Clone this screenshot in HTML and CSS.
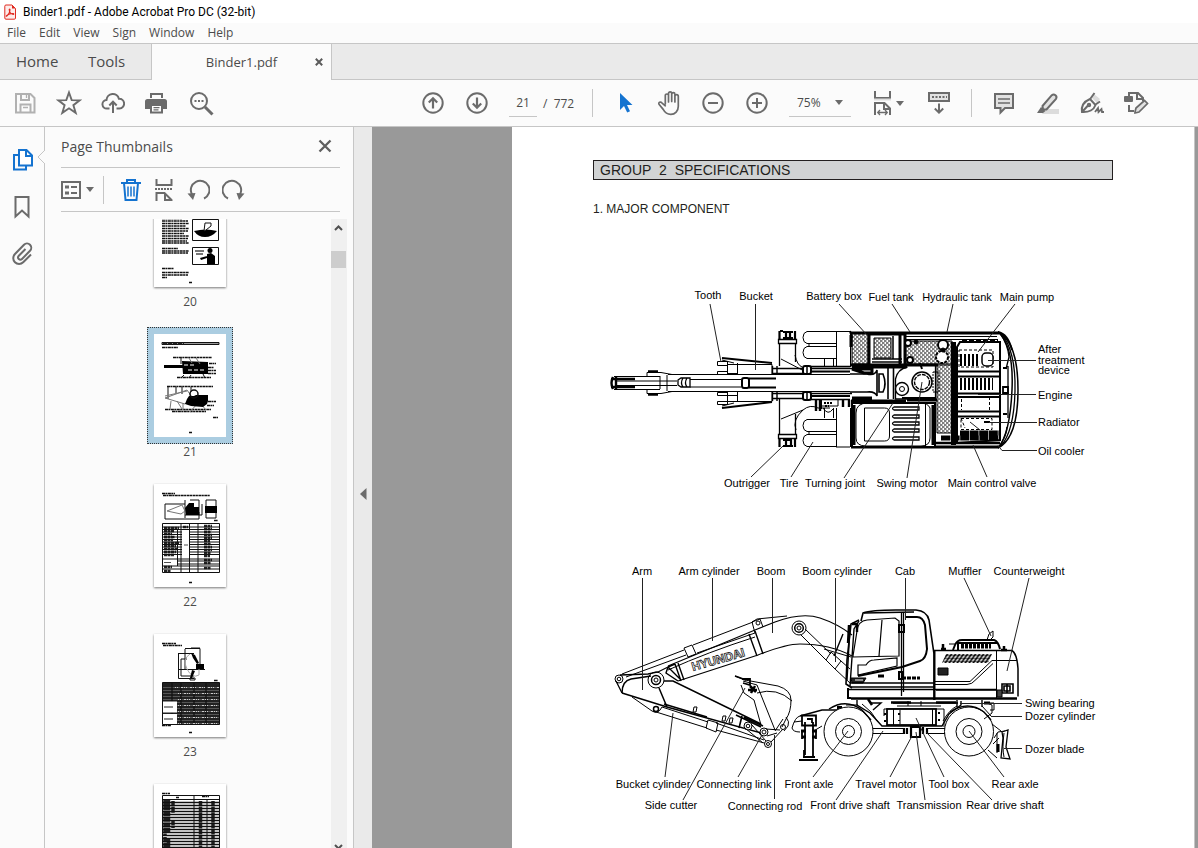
FILE: index.html
```html
<!DOCTYPE html>
<html lang="en">
<head>
<meta charset="utf-8">
<title>Binder1.pdf - Adobe Acrobat Pro DC (32-bit)</title>
<link rel="stylesheet" href="styles.css">
</head>
<body>
<div class="app">
  <header class="titlebar">
    <svg class="logo" width="12" height="16" viewBox="0 0 12 16" fill="none" stroke="#e02a20" aria-hidden="true"><path d="M2 1h6l3.500 3.500v9.500a1.200 1.200 0 0 1-1.200 1.200h-8.300a1.200 1.200 0 0 1-1.200-1.200v-11.800A1.200 1.200 0 0 1 2 1z" fill="#fdecea"/><path d="M8 1v3.500h3.500z" fill="#e02a20" stroke="none"/><path d="M2.600 12.200c1.500-1 3.200-3.600 3.400-6.400.1-.9-.9-.9-.8 0 .3 2.200 1.800 4.300 4 4.700.8 0 .8-.9 0-1-2.200-.2-4.400.6-6.400 1.900-.7.500-.7.900-.2.800z" stroke-width="1.100"/></svg>
    <span>Binder1.pdf - Adobe Acrobat Pro DC (32-bit)</span>
  </header>
  <nav class="menubar">
    <button>File</button><button>Edit</button><button>View</button><button>Sign</button><button>Window</button><button>Help</button>
  </nav>
  <div class="tabs">
    <button class="tab home">Home</button><button class="tab tools-tab">Tools</button>
    <div class="doc-tab"><button class="tab-name">Binder1.pdf</button><button class="tab-close" aria-label="Close tab"><svg width="8" height="8" viewBox="0 0 8 8" stroke="#5b5b5b" stroke-width="2"><path d="M.8.8l6.400 6.400M7.200.8L.8 7.200"/></svg></button></div>
    <div class="tab-fill"></div>
  </div>
  <div class="toolbar">
    <button class="tool" aria-label="Save"><svg width="24" height="24" viewBox="0 0 24 24" fill="none" stroke="#b1b1b1" stroke-width="2"><path d="M3 3h14.500l4 4v14.500H3z"/><path d="M8 3v6h8V3M7.500 21v-7.500h10V21"/><path d="M13.500 4v3M10 16.500h5" stroke-width="1.300"/></svg></button>
    <button class="tool" aria-label="Star"><svg width="26" height="26" viewBox="0 0 26 26" fill="none" stroke="#6b6b6b" stroke-width="1.900"><path d="M13 2.500l2.700 7.600 8 .2-6.300 4.900 2.300 7.700-6.700-4.600-6.700 4.600 2.300-7.700-6.300-4.900 8-.2z"/></svg></button>
    <button class="tool" aria-label="Upload"><svg width="24" height="24" viewBox="0 0 24 24" fill="none" stroke="#6b6b6b" stroke-width="2"><path d="M8.500 17.500H6a4.300 4.300 0 0 1-.5-8.600 6.300 6.300 0 0 1 12.400-1.200 4.900 4.900 0 0 1 .6 9.800h-3"/><path d="M12 22V11M8.300 14.500L12 10.700l3.700 3.800"/></svg></button>
    <button class="tool" aria-label="Print"><svg width="26" height="24" viewBox="0 0 26 24" fill="#6b6b6b"><path d="M6 7V2h13v5h-2V4H8v3zM1 10.500A2.500 2.500 0 0 1 3.500 8h17a2.500 2.500 0 0 1 2.500 2.500V18h-4v-4H6v4H1zM6 14h13v8.500H6z"/><path d="M8 15h9v5.500H8z" fill="#fff"/><path d="M9.500 16h6v1.200h-6zM9.500 18.300h5v1.200h-5z"/></svg></button>
    <button class="tool" aria-label="Search"><svg width="26" height="26" viewBox="0 0 26 26" fill="none" stroke="#6b6b6b" stroke-width="2"><circle cx="11" cy="11" r="8"/><path d="M17 17l7.500 7.500" stroke-width="3"/><path d="M6.500 11h2M10 11h2M13.500 11h2" stroke-width="1.800"/></svg></button>
    <div class="toolset">
      <button class="tool" aria-label="Previous page"><svg width="24" height="24" viewBox="0 0 24 24" fill="none" stroke="#6b6b6b" stroke-width="2"><circle cx="12" cy="12" r="9.700"/><path d="M12 17.500V7.500M7.800 11.500L12 7.200l4.200 4.300" stroke-width="2.200"/></svg></button>
      <button class="tool" aria-label="Next page"><svg width="24" height="24" viewBox="0 0 24 24" fill="none" stroke="#6b6b6b" stroke-width="2"><circle cx="12" cy="12" r="9.700"/><path d="M12 6.500v10M7.800 12.500l4.200 4.300 4.200-4.300" stroke-width="2.200"/></svg></button>
      <div class="pager"><input class="page-input" aria-label="Page number" value="21"><span>/&nbsp; 772</span></div>
      <button class="tool after-sep" aria-label="Select"><svg width="24" height="24" viewBox="0 0 24 24"><path d="M7 2v17l4-4 3.200 6.500 2.800-1.300-3-6.300h5.500z" fill="#1473d0"/></svg></button>
      <button class="tool" aria-label="Hand"><svg width="26" height="26" viewBox="0 0 26 26" fill="none" stroke="#6b6b6b" stroke-width="1.700" stroke-linecap="round" stroke-linejoin="round"><path d="M9.300 14V5.600a1.600 1.600 0 0 1 3.200 0V12M12.500 11.500V3.400a1.600 1.600 0 0 1 3.200 0v8.100M15.700 11.500V4.200a1.600 1.600 0 0 1 3.200 0V12M18.900 12V6.400a1.700 1.700 0 0 1 3.400 0v9.800c0 4.800-3.200 8.200-7.500 8.200-4 0-6-2-7.600-5L3 14.200c-.9-1.800 1.600-3 2.800-1.400l3.500 3"/></svg></button>
      <button class="tool" aria-label="Zoom out"><svg width="24" height="24" viewBox="0 0 24 24" fill="none" stroke="#6b6b6b" stroke-width="2"><circle cx="12" cy="12" r="9.700"/><path d="M7 12h10"/></svg></button>
      <button class="tool" aria-label="Zoom in"><svg width="24" height="24" viewBox="0 0 24 24" fill="none" stroke="#6b6b6b" stroke-width="2"><circle cx="12" cy="12" r="9.700"/><path d="M7 12h10M12 7v10"/></svg></button>
      <label class="zoom"><select aria-label="Zoom level"><option>75%</option></select><i class="caret"></i></label>
      <button class="tool fit" aria-label="Fit width"><svg width="22" height="26" viewBox="0 0 22 26" fill="none" stroke="#6b6b6b" stroke-width="2"><path d="M3 1v7h15V1"/><path d="M3 25V13h9.500l5.500 5.500V25M12 13v6h6"/><path d="M6 22.500h9M8 20l-2.300 2.500L8 25M13 20l2.300 2.500L13 25" stroke-width="1.300"/><path d="M2 9.500h17" stroke="#ddd"/></svg><i class="caret"></i></button>
      <button class="tool keys" aria-label="Scrolling mode"><svg width="24" height="24" viewBox="0 0 24 24" fill="none" stroke="#6b6b6b" stroke-width="2"><path d="M2 2h20v8H2z" fill="#e2e2e2"/><path d="M5 6h15" stroke-dasharray="2 1.500"/><path d="M12 12.500v9M7.800 17.500l4.200 4.200 4.200-4.200"/></svg></button>
      <span class="sep"></span>
      <button class="tool after-sep" aria-label="Comment"><svg width="24" height="24" viewBox="0 0 24 24" fill="#e2e2e2" stroke="#6b6b6b" stroke-width="2"><path d="M3 3h18v14h-8l-4.500 4.500V17H3z"/><path d="M6 8h12M6 12h12" stroke-width="1.500"/></svg></button>
      <button class="tool" aria-label="Highlight"><svg width="24" height="24" viewBox="0 0 24 24"><path d="M9 18h14v5H6z" fill="#dcdcdc"/><path d="M6.500 15L15.800 4.200a2.800 2.800 0 0 1 4.200 3.600L10.500 18.500H7z" fill="#e2e2e2" stroke="#6b6b6b" stroke-width="2"/><path d="M5 16l4.500 4-2.500 2H1z" fill="#6b6b6b"/></svg></button>
      <button class="tool" aria-label="Sign"><svg width="26" height="26" viewBox="0 0 26 26" fill="none" stroke="#6b6b6b" stroke-width="2"><path d="M15 4l6 5-3 4-6-6z" fill="#dcdcdc" stroke="none"/><path d="M3 22c-.8-5 1-10 8-13l5.500 6C15 19.500 10 22.500 3 22zM3 22l6-6.500M11.500 8.500L15.500 3M16.500 14.500l4.500-3"/><circle cx="10" cy="15" r="1.200"/><path d="M16 22l3-4 .5 4 3-3 .5 3h2" stroke-width="1.800"/></svg></button>
      <button class="tool" aria-label="Edit"><svg width="26" height="26" viewBox="0 0 26 26" fill="none" stroke="#6b6b6b" stroke-width="2"><path d="M6 6V3h9l5 5v3M14 3v6h6M6 15v6h5"/><rect x="1" y="6" width="9" height="6" rx="1" fill="#6b6b6b" stroke="none"/><path d="M12 22l1-4 8.500-7.500 3 3L16 22l-4 1z" fill="#e2e2e2" stroke-width="1.700"/></svg></button>
    </div>
  </div>
  <main class="workspace">
    <nav class="rail">
      <button aria-label="Page thumbnails"><svg width="22" height="24" viewBox="0 0 22 24" fill="none" stroke="#1473d0" stroke-width="2"><path d="M7 7H2v14.500h12V18"/><path d="M7 2h7.500L20 7.500V17.500H7z" fill="#fff"/><path d="M14 2v6h6"/></svg></button>
      <button aria-label="Bookmarks"><svg width="22" height="24" viewBox="0 0 22 24" fill="none" stroke="#6b6b6b" stroke-width="2"><path d="M3.500 2h13v19.500L10 15.500l-6.500 6z"/></svg></button>
      <button aria-label="Attachments"><svg width="22" height="24" viewBox="1 0 22 24" fill="none" stroke="#6b6b6b" stroke-width="2"><path d="M14.500 7L7.800 13.800a2.200 2.200 0 0 0 3.200 3.200l8-8.200a4.200 4.200 0 0 0-6-6L4 12a5.800 5.800 0 0 0 8.200 8.300L20 12.500"/></svg></button>
    </nav>
    <svg class="pointer" width="8" height="16" viewBox="0 0 8 16"><path d="M8 0v1L1 8l7 7v1" fill="#fbfbfb" stroke="#c6c6c6"/></svg>
    <aside class="panel">
      <div class="panel-head"><h2>Page Thumbnails</h2><button aria-label="Close panel"><svg width="14" height="14" viewBox="0 0 14 14" stroke="#5f5f5f" stroke-width="2.300"><path d="M1.500 1.500l11 11M12.500 1.500l-11 11"/></svg></button></div>
      <div class="panel-tools">
        <button class="opts" aria-label="Options"><svg width="20" height="18" viewBox="0 0 20 18" fill="none" stroke="#6b6b6b" stroke-width="2"><path d="M1 1h18v16H1z"/><path d="M4 6h4M4 12h4" stroke-width="3"/><path d="M10 6h6M10 12h6"/></svg><i class="caret"></i></button>
        <button aria-label="Delete"><svg width="22" height="24" viewBox="0 0 22 24" fill="none" stroke="#1473d0" stroke-width="2"><path d="M1 5h20M7 5V2h8v3M4 5l1.500 17h11L18 5"/><path d="M8 8.500v10M11 8.500v10M14 8.500v10" stroke-width="1.500"/></svg></button>
        <button aria-label="Extract"><svg width="20" height="24" viewBox="0 0 20 24" fill="none" stroke="#6b6b6b" stroke-width="2"><path d="M2.500 1v6h15V1M2.500 23v-8h8l7 7v1M11 15v7h7"/><path d="M1 11h18" stroke-dasharray="2 1"/></svg></button>
        <button aria-label="Rotate left"><svg width="24" height="24" viewBox="0 0 24 24" fill="none" stroke="#6b6b6b" stroke-width="2"><path d="M18 20.500a9.300 9.300 0 1 0-12-4"/><path d="M1.500 15.500l8-.5-2.500 7z" fill="#6b6b6b" stroke="none"/></svg></button>
        <button aria-label="Rotate right"><svg width="24" height="24" viewBox="0 0 24 24" fill="none" stroke="#6b6b6b" stroke-width="2"><path d="M6 20.500a9.300 9.300 0 1 1 12-4"/><path d="M22.500 15.500l-8-.5 2.500 7z" fill="#6b6b6b" stroke="none"/></svg></button>
      </div>
      <div class="thumb-area">
        <ol class="thumbs">
          <li><button><svg viewBox="0 0 72 103"><g class="tx"><path d="M8 34.500h20M8 37h26M8 39.500h27M8 42h24M8 44.500h27M8 47h26M8 49.500h22M8 52h27M8 54.500h26M8 57h25M8 59h27M8 64.500h16M8 67h27M8 69h26M8 84.500h12M8 88.500h27M8 91h26M8 93.500h5M35 98.500h3"/></g><path d="M38.500 35.500h26v21h-26zM38.500 63.500h26v17h-26z" fill="none" stroke="#111"/><path d="M40 47q12-3 23 0-5 6-12 6t-11-6z"/><path d="M50 47l1-8h6v3l-5 4z" fill="#fff" stroke="#111"/><circle cx="56" cy="66.500" r="2.500"/><path d="M53 70l4-1 4 3v8h-8zM46 74l7-2v2l-6 2z"/><path d="M41 67h9M42 70h7" stroke="#777" stroke-width="2"/></svg><span>20</span></button></li>
          <li class="current"><button><svg viewBox="0 0 72 103"><path d="M8 8.500h57v2H8z" fill="#999" stroke="#111"/><path d="M9 9.500h21" stroke="#222" stroke-width="2" stroke-dasharray="4 1"/><g class="tx"><path d="M8 13.500h16M19 23.500h39M23 43.500h34M13 52.500h46M11 75.500h46M18 77.500h34M59 83.500h5M35 98.500h3M55 29.500h7M54 33.500h6M54 36.500h8M54 39.500h8M54 67.500h8M53 71.500h7"/></g><path d="M28 27l26 1v12H29zM10 31h19v3H10z"/><path d="M27 24v6M30 41l-3 3M37 41l-2 3M49 40l2 4M14 53v12M22 53v6M28 53v7M37 53v5" stroke="#111"/><path d="M35 24l3 5M42 24l4 6M11 64l22-8 5 7-7 7zM11 62l22-5M17 67l-1 8M23 67l5 8M29 69v7M43 70l-7 8M47 70l5 6" fill="none" stroke="#777"/><path d="M33 65l2-3h5l2-1h12v6l-1 3-4 3-12-1-6-2z"/><circle cx="40" cy="60" r="4" fill="none" stroke="#111" stroke-width="1.500"/><path d="M30 31h12M34 36h16" stroke="#fff" stroke-dasharray="4 2"/></svg><span>21</span></button></li>
          <li><button><svg viewBox="0 0 72 103"><g class="tx"><path d="M8 9.500h13M9 11.500h47M60 36.500h4M35 98.500h3"/></g><path d="M11 20v15h34v-7M11 20h20M31 16v18M36 16h9v15M48 20v11H31M52 16h10v18H52z" fill="none" stroke="#111"/><path d="M13 27l15-6 3 6-4 3z" fill="none" stroke="#777"/><path d="M31 24l4-5h5v4h5v8H32zM51 22h12v7H51z"/><path d="M8.500 39.500h57v49h-57z" fill="#fff" stroke="#111"/><path d="M10 44h15M10 47h10M10 50h8M10 53h11M10 56h9M10 59h15M10 62h12M10 65h14M10 68h12M10 71h10M10 83h8M10 87h7M29 43h5M50 42h8M50 45h8M50 48h7M50 51h8M50 54h8M50 57h6M50 60h7M50 63h8M50 66h8M50 69h7M50 72h6M50 76h8M50 79h7M50 84h7" stroke="#222" stroke-width="2.500" stroke-dasharray="3 .5"/><path d="M9 43h57M9 45.500h57M9 48h57M9 50.500h57M9 53h57M9 55.500h57M9 58h57M9 60.500h57M9 63h57M9 65.500h57M9 68h57M9 70.500h57M9 75h57M24 77h42M24 80h42M9 82h57M9 85h57M23.500 46v36M27 39v49M35.500 39v49M44 39v49" stroke="#111"/><path d="M28 47h7v25h-7zM9 76h13v5H9z" fill="#fff"/><path d="M30 61h4M10 78.500h7" stroke="#222" stroke-width=".8"/></svg><span>22</span></button></li>
          <li><button><svg viewBox="0 0 72 103"><g class="tx"><path d="M8 9.500h14M9 11.500h19M60 46.500h4M8 91.500h9M35 98.500h3"/></g><path d="M24.500 19v25.500H40M24 19.500h16M31 15v20M31 14.500h15V35M24 35.500h27M27 25v17h13M27 25h6M37 14h9M36 44v2h5v-2z" fill="none" stroke="#111"/><path d="M36 20q-8 5-3 15t12 6V30" fill="none" stroke="#aaa"/><path d="M42 30h8v5h-8zM37 19l4 2 4 8-2 1-4-6zM38 36l3 1-3 7h-2z"/><path d="M8.500 48.500h57v42h-57z" fill="#555" stroke="#111"/><path d="M9 50h56M9 52h56M9 55h56M9 58h56M9 61h56M9 64h56M9 67h56M9 70h56M9 73h56M9 76h56M9 79h56M9 82h56M9 85h56M9 88h56M18 49v41M27 49v41M40 49v41M52 49v41" stroke="#111" stroke-width="1.300"/><path d="M21 53.500h44M24 59.500h40M24 65.500h40M24 71.500h40M24 77.500h40M24 83.500h40M24 89.500h40" stroke="#ccc" stroke-dasharray="1 1 1 3 2 1"/><path d="M9 67.500h14v11H9zM9 80h14v10H9z" fill="#fff"/><path d="M10 73h9M10 85h9" stroke="#222"/></svg><span>23</span></button></li>
          <li><button aria-label="24"><svg viewBox="0 0 72 103"><g class="tx"><path d="M8 9.500h8M22 13.500h3M48 12.500h7"/></g><path d="M8.500 11.500h57V103h-57zM8 15.500h58M40 11v92M53 15v88" fill="none" stroke="#111"/><path d="M11 16v36M14.500 16v32M11 53v12M14.500 55v9M19 17v12M19 36v8M46.500 17v46M59 17v46" stroke="#222" stroke-width="3.500" stroke-dasharray="5 .6"/><path d="M9 18.500h56M9 21.500h56M9 24.500h56M9 27.500h56M9 30.500h56M9 33.500h56M9 36.500h56M9 39.500h56M9 42.500h56M9 45.500h56M9 48.500h56M9 51.500h56M9 54.500h56M9 57.500h56M9 60.500h56M9 63.500h56" stroke="#111" stroke-width="1.300"/></svg></button></li>
        </ol>
        <div class="scrollbar"><svg width="9" height="6" viewBox="0 0 9 6" fill="none" stroke="#505050" stroke-width="2"><path d="M1 5l3.500-3.500L8 5"/></svg><div class="scroll-thumb"></div><svg class="down" width="9" height="6" viewBox="0 0 9 6" fill="none" stroke="#505050" stroke-width="2"><path d="M1 3l3.500 3.500L8 3"/></svg></div>
      </div>
    </aside>
    <button class="collapse" aria-label="Collapse panel"><svg width="7" height="12" viewBox="0 0 7 12"><path d="M6.500 0v12L0 6z" fill="#6b6b6b"/></svg></button>
    <section class="viewer">
      <article class="page">
        <h1>GROUP&nbsp; 2&nbsp; SPECIFICATIONS</h1>
        <h3>1. MAJOR COMPONENT</h3>
        <svg class="figure top-view" viewBox="593 280 520 220" role="img" aria-label="Top view">
          <defs>
            <pattern id="holes" width="4" height="4" patternUnits="userSpaceOnUse"><rect width="4" height="4" fill="#fff"/><path d="M0 1h2.500M2 3h2M0 3h.5" stroke="#000" stroke-width="1.100"/></pattern>
            <pattern id="fins" width="4" height="4" patternUnits="userSpaceOnUse"><path d="M1 0v4" stroke="#000" stroke-width="2"/></pattern>
          </defs>
          <g class="ink">
            <path d="M614 376.500h46M614 389.500h46M615 381h62M615 385.500h62M668 374.500h182M668 391.500h182M667 375v16"/>
            <path d="M613 377q-3 6 0 12M611 379h24M611 387h24M616 376v13" stroke-width="2.400"/>
            <path d="M647 376v-3.500h14l11 2M647 390v3.500h14l11-2M660 376v13"/><path d="M648 371.500h10M648 394.500h10" stroke-width="2.500"/>
            <path d="M678 380l3-2h9v9h-9l-3-2zM683 378q-3 5 0 9M687 378q-3 5 0 9" stroke-width="1.300"/><path d="M690 379.500h51M690 387h51"/>
            <rect x="742" y="378" width="7" height="10" rx="2" stroke-width="2"/><path d="M749 378.500h27M749 387.500h27" stroke-width="2"/>
            <path d="M717.500 361.500h10v4h-10zM717.500 371.500h10v3h-10zM717.500 392.500h10v3h-10zM717.500 401.500h10v3h-10zM727.500 361v13M727.500 392v13M737.500 363v11M737.500 392v10M727 364.500h45v9.500M727 401.500h45V392M727 373.500h10M727 395.500h10"/>
            <path d="M722 358l50 5M722 408l50-6" stroke-width="2"/><path d="M722 360l12 3M722 406l12-3"/>
            <path d="M779.500 344v22M795.500 344v18M779.500 398v36M795.500 414v20M778.500 339.500h18v4h-18zM778.500 434.500h18v4h-18z" stroke-width="1.300"/>
            <path d="M779.500 331v8M783 332h10M795 331v8M786 333v5M790 333v5M780 331h3M783 338h10M779.500 439v8M795 439v8M783 446h10M786 439v7M791 440v5M783 440h9" stroke-width="2.200"/>
            <path d="M781 359l27 14M795 355q2 10 7 12M781 419l22-9q7-6 15-2h12M796 430q-4-10 7-20"/>
            <path d="M772 368.500h80M772 373.500h32M772 393.500h80M772 398.500h32M772.500 366v9M777 366v9M772.500 392v9M777 392v9M810 366.500h40M810 399.500h40" stroke-width="1.400"/><path d="M812 371.500h38M812 396h38" stroke-width="2"/>
            <rect x="803" y="366" width="8" height="8" rx="2" fill="#fff" stroke-width="2"/><rect x="803" y="392" width="8" height="8" rx="2" fill="#fff" stroke-width="2"/><path d="M807 366v8M807 392v8" stroke-width="1.500"/>
            <path d="M837 331.500h-30q-4 1-4 6t4 6h30M837 346.500h-30q-4 1-4 6t4 6h30M837 419.500h-30q-4 1-4 6t4 6h30M837 434.500h-30q-4 1-4 6t4 6h30M836.500 331v36M836.500 408v39M850.500 331v36M850.500 408v39M836 331.500h14M836 447h14M809 343v4M809 431v4"/>
            <path d="M824.500 359v7M833.500 359v7M821.500 400v9M821 406h17v-6M824.500 408v10M833.500 408v10M823 408q5 8 10 1"/><path d="M816 400v11M820 400v11M843 400v7M849 400v7" stroke-width="2.400"/><path d="M824 403h9M825 406h4" stroke-dasharray="2 1" stroke-width="2"/>
            <path d="M851 333h148M851 447h148" stroke-width="3"/><path d="M868 339.500h130M905 336.500h92"/>
            <path d="M852 334h16v30h-16zM904 341h48v23h-48zM937 365h15v68h-15z" fill="url(#holes)"/>
            <path d="M869 334v33h36v-33z" fill="#fff" stroke-width="3"/><path d="M874 338h17v20h-17z" fill="url(#holes)"/><path d="M872 359h30M872 362h30M893 336v23" stroke-width="1.500"/><path d="M900 335v31M851 335v12M851 365h54M906 365h32" stroke-width="3"/><path d="M852 338l-2-7" stroke-width="2"/>
            <circle cx="943" cy="345" r="5" fill="#fff" stroke-width="2"/><circle cx="942" cy="357" r="6" fill="#fff" stroke-width="2" stroke-dasharray="3 1"/><circle cx="908" cy="343" r="3" fill="#fff" stroke-width="2"/><circle cx="916" cy="342" r="2" fill="#000"/><circle cx="910" cy="360" r="3" fill="#fff" stroke-width="2"/><circle cx="943" cy="350" r="2" fill="#000"/>
            <path d="M953.500 342v103" stroke-width="5"/><path d="M957 443V347l3-5h40v98z" fill="#fff" stroke-width="2"/>
            <path d="M962 341h36" stroke-width="4" stroke-dasharray="5 2"/><path d="M960 354h18v12h-18zM960 378h33v12h-33z" fill="url(#fins)" stroke="none"/><path d="M959 350h34v17h-34z" stroke-dasharray="3 2"/>
            <rect x="982" y="353" width="11" height="13" rx="4" fill="#fff" stroke-width="1.500"/>
            <path d="M954 371.500h46M954 376.500h46M954 393.500h46M954 397h46M954 411.500h46M954 416.500h46M1000 343v92" stroke-width="2"/><path d="M961.500 399v11M989.500 397v14M961 418.500h31v11h-31zM961 418l4 10" stroke-dasharray="3 2"/>
            <path d="M960 433h39M941 438h58" stroke-width="5" stroke-dasharray="9 .6"/><path d="M935 443h65" stroke-width="2.400"/><path d="M984 422h6" stroke-width="2"/>
            <path d="M998 332q20 10 20 58t-20 58q12-14 14-58t-14-58z" fill="#fff" stroke-width="1.500"/><path d="M1001 333q15 18 14 58t-14 55M1000 333q8 12 9 24l-3 12M1008 366v52M999 447q8-12 8-20" stroke-width="1.300"/><path d="M998 332q10 2 14 18M1003 387v6h5v-6zM1003 368h4M1003 414h4" stroke-width="1.800"/>
            <path d="M850 374h17q8 2 10-4v26q-2-5-10-4h-17M879 374v18h4q4-8 0-18zM893.500 367v32M888 367v32" stroke-width="1.600"/><path d="M852 366h55M852 369h20v4h-8zM852 398h20M851 401h55M907 400h30" stroke-width="3"/>
            <path d="M935.500 365v34h-40v-20q2-10 12-12" stroke-width="1.300"/><circle cx="922" cy="382" r="10" fill="#fff" stroke-width="1.500"/><circle cx="922" cy="382" r="7.500" stroke-dasharray="4 1" stroke-width="1.400"/><circle cx="902" cy="389" r="6.500" fill="#fff" stroke-width="1.400"/><circle cx="902" cy="389" r="2.500"/><path d="M933 372h6v20h-6z" stroke-dasharray="2 1"/><path d="M922 369l-2-6M902 398h34" stroke-width="2"/>
            <path d="M852 403h83v44h-83z" fill="#fff" stroke-width="2"/><path d="M854 405v40M933 405v40" stroke-width="3"/><path d="M930 408q-2-5-10-5h-52q-12 0-12 10v25q0 8 10 8h55q9 0 9-8z"/><path d="M864.500 408h20q5 0 5 5v23q0 5-5 5h-20zM925.500 404v42"/>
            <path d="M894 407h25v3h-25q-3-1.500 0-3zM894 415h25v3h-25q-3-1.500 0-3zM894 422h25v3h-25q-3-1.500 0-3zM894 429h25v3h-25q-3-1.500 0-3zM894 437h25v3h-25q-3-1.500 0-3z" stroke-width="1.300"/>
          </g>
          <path class="lead" d="M710 304l11 58M755.500 304v66M839 304l28 31M892 304l18 28M953 304l-6 28M1015 304l-37 48M1036 360.500h-48M1036 394.500h-58M1037 422.500h-48M1037 450.500h-35l-4-5M751 477l32-31M791 477l22-35M844 478l49-75M907 478l15-96M987 477l-14-32M980 430l-10-8"/>
          <g class="lab mid"><text x="708" y="299">Tooth</text><text x="756" y="300">Bucket</text><text x="834" y="300">Battery box</text><text x="891" y="301">Fuel tank</text><text x="957" y="301">Hydraulic tank</text><text x="1027" y="301">Main pump</text><text x="747" y="487">Outrigger</text><text x="789" y="487">Tire</text><text x="835" y="487">Turning joint</text><text x="907" y="487">Swing motor</text><text x="992" y="487">Main control valve</text></g>
          <g class="lab"><text x="1038" y="353">After</text><text x="1038" y="364">treatment</text><text x="1038" y="374">device</text><text x="1038" y="399">Engine</text><text x="1038" y="426">Radiator</text><text x="1038" y="455">Oil cooler</text></g>
        </svg>
        <svg class="figure" viewBox="593 555 520 265" role="img" aria-label="Side view">
          <defs><pattern id="vents" width="4" height="3" patternUnits="userSpaceOnUse" patternTransform="skewX(-35)"><path d="M1.500 0v3" stroke="#000" stroke-width="2"/><path d="M0 1.500h4" stroke="#000" stroke-width=".8"/></pattern></defs>
          <g class="ink">
            <path d="M668 666l87-36 20-8q27-10 45-4 18 6 32 17M678 681l80-26q28-11 42-11 30 0 52 12" stroke-width="1.200"/><path d="M749 634l8 22M755 631l8 23M675 664l6 17M678 663l6 17M668 667l-2 6 12 8M668 667l7-3M843 634l-9 22M668 667q8 8 13 13" stroke-width="1.400"/>
            <path d="M622 674l62-24M626 677l60-22M684 648l8-3 4 9-8 3zM693 645l60-23M697 653l58-20M752 622l5-3 30-3M755 633l-3-11 8-3 3 8"/><circle cx="758" cy="623" r="2"/><path d="M668 670q40-18 87-33"/>
            <circle cx="619" cy="679" r="4"/><circle cx="619" cy="679" r="1.800"/><path d="M616 681l6 12M620 675l28-1 10-2 12-6" stroke-width="1.300"/><path d="M622 693q0-12 9-14l20-3" stroke-width="1.500"/>
            <circle cx="656" cy="680" r="8"/><circle cx="656" cy="680" r="4.500" stroke-width="1.500"/><circle cx="656" cy="680" r="2"/>
            <path d="M622 693l45 14 98 27M664 681h9l88 43M659 688l8 19" stroke-width="1.500"/><path d="M736 715l25 12M742 716l-3 12M744 717l19 9" stroke-width="1.600"/>
            <path d="M632 697l20 14q6 4 10-4l46 15M653 711l54 17M708 720l10 3-2 9-10-4zM716 723l48 17M716 730l52 14"/><circle cx="656" cy="709" r="2.500" stroke-width="1.500"/><path d="M664 704l43 13" stroke-width="1.500"/><path d="M694 707l-1 5h3l1-5zM723 716l-1 5h3l1-5zM730 718l-1 5h3l1-5z"/>
            <circle cx="748" cy="726" r="4" fill="#fff"/><circle cx="748" cy="726" r="1.800"/><circle cx="764" cy="732" r="4" fill="#fff"/><circle cx="764" cy="732" r="2"/><circle cx="768" cy="744" r="3.500" fill="#fff"/><circle cx="768" cy="744" r="1.500"/><path d="M745 728l18 15M752 725l14 16M771 742l12-13M766 729l14 1M767 736l10-3"/>
            <path d="M735 676l10 4 33 6q13 4 13 14 0 12-5 19l-4 8M743 681l14 4 18 45M741 685l3 8 10 7 7 25M757 693q20-6 35 8M783 719l-8 12M786 717q4 5 2 9l-4 5"/><path d="M735 676l11 4M742 679h8v6l-7-2" stroke-width="1.800"/><path d="M750 686l6 6M755 686l-4 7M748 690h9" stroke-width="2.500"/><circle cx="783" cy="727" r="2.500"/>
            <circle cx="799" cy="628" r="7"/><circle cx="799" cy="628" r="4.300" stroke-width="1.500"/><circle cx="799" cy="628" r="2"/><path d="M805 629l26 25M801 635l25 25M831 652l10 9-6 8-9-9zM841 661l9 8M835 669l15 14M824 649l27 8"/>
            <path d="M852 688l-6-4 1-24 4-36 8-4M861 621l2-8q8-3 33-3h20q11 1 13 10l5 34v46" stroke-width="1.600"/><path d="M864 613l50-1M850 686l4-57 5-8M847 680l3-53" stroke-width="1.400"/><path d="M849 625l-1 18M852 624h5v8" stroke-width="2.400"/>
            <path d="M853 656l4-25q1-10 10-11l28-2 4 3v35l-46 1zM882 620l-3 36M858 665h8q3-5 8-5l23-2v8l-39 9z" stroke-width="1.200"/><path d="M901.500 612v84" stroke-width="1.300"/><path d="M903.500 612v80" stroke-width="1.300"/><path d="M905 617h12q6 0 8 8l2 24q-1 10-7 12l-18 6q-20 4-44 9" stroke-width="2"/><path d="M899 625h5v7h-5zM899 672h4v7h-4z" stroke-width="2"/><path d="M902 678h18" stroke-width="3" stroke-dasharray="4 1"/><path d="M851 678h15l-3 5h-11z" fill="#222"/><path d="M855 680h8" stroke="#fff"/><path d="M878 676h6" stroke-width="3"/>
            <path d="M851 687h84M936 690h60M850 683h85" stroke-width="1.300"/><path d="M848 689.500h148" stroke-width="1.500"/><path d="M851 698.500h166" stroke-width="2.400"/><path d="M848 688v10h3" stroke-width="2"/>
            <path d="M934.500 650v50" stroke-width="2"/><path d="M934 650.500h78q5 3 6 18v28" stroke-width="1.500"/><path d="M996.500 650v48M934 681.500h36l22-21h25M934 684.500h33q5 0 9-5l17-16"/><path d="M946 654h46l-4 9h-46z" fill="url(#vents)" stroke="none"/><path d="M938 668h10v7h-10z" fill="#222"/>
            <path d="M953 650l2-5q2-5 7-5h32q4 1 6 9M958 650v-7h40" stroke-width="2"/><path d="M961 646h30" stroke-width="5" stroke-dasharray="3 1"/><path d="M987 640l2-6 4-3v6l-3 3M949 644h6"/><path d="M943 644v4M941 649h5M1004 646v4M1001 650h6" stroke-width="2.500"/><path d="M1002 684h11v9h-11zM1004 686h6v5h-6zM1007 684v9" stroke-width="1.600"/><path d="M997 690h5v7h-5z" fill="#444"/>
            <path d="M857 700v5l13 8 12 13h60l7-12 12-9v-4M873 710l8-7-10 0M957 700v7M982 700v7M893 703h65" stroke-width="1.400"/><path d="M891 702.500h20M936 702.500h20M868 699l4 6" stroke-width="2.500"/><path d="M897 706h44M908 701v5M921 701v5M884 716v-7h60v18"/>
            <rect x="887" y="709" width="49" height="16" fill="#fff" stroke-width="1.800"/><path d="M893.500 709v16M932.500 709v16M900 710v14"/><path d="M885 713v10M939 712v10M899 713v8" stroke-width="2" stroke-dasharray="2 5"/>
            <path d="M800 716l22-6h24" stroke-width="1.500"/><path d="M837 707.500h5M842 710h8" stroke-width="3"/><path d="M862 704q10 7 16 18M957 706q-8 4-14 15M982 706l9 10M846 705h12"/>
            <circle cx="848.500" cy="731.500" r="24.500" fill="#fff"/><circle cx="848.500" cy="731.500" r="13"/><circle cx="848.500" cy="731.500" r="6"/><circle cx="969" cy="731.500" r="24.500" fill="#fff"/><circle cx="969" cy="731.500" r="13"/><circle cx="969" cy="731.500" r="6"/>
            <path d="M829 709q17-11 33 1l9 10M950 712q18-12 34 0l7 8" stroke-width="1.400"/><path d="M873 728.500h32M873 733.500h32M926 728.500h19M926 733.500h19"/><path d="M911 727h9v10h-9zM904 728v6M907 728v6M923 727v7M927 728v6" stroke-width="2.200"/>
            <path d="M800 716q-5 1-8 12 1 4 8 4M794 722l8-1M822 726l-10 6"/><path d="M802 715.500h14v10h-14zM805 722v33M813 722v33M807 719h5v4M802 731v8M816 731v8M804 750v8M813 750v8" stroke-width="1.800"/><path d="M801 731h5M812 731h5M802 737h4M812 737h4" stroke-width="3"/><path d="M799 760h19M803 757h12" stroke-width="2"/>
            <path d="M987 703l5 2v8l-8 6M989 703h5v7h-4M992 724l9 7M994 738l4-6 7-1M988 750l9 8M993 744l6-6M997 753v-20"/><path d="M984 703h6M998 744v8" stroke-width="3"/><path d="M1002 732l6-2-2 17 4 12-9-1 2-20z" fill="#fff" stroke-width="1.300"/><path d="M1004 733q-2 15 0 24"/>
          </g>
          <text class="brand" x="693" y="671" transform="rotate(-16 693 671)">HYUNDAI</text>
          <path class="lead" d="M642.500 578v112M712.500 578v63M772.500 578v55M835.500 578v84M905.500 578v42M964 578l27 58M1029 578l-22 93M1022 703.500h-62M1022 716.500h-31M1022 748.500h-18M665 777l8-64M683 800l62-112M738 777l24-42M774.500 799v-64M813 777l35-46M836 800l47-69M890 777l22-41M944 777l-28-59M925 800l-9-68M1004 777l-35-46M992 800l-66-68"/>
          <g class="lab mid"><text x="642" y="575">Arm</text><text x="709" y="575">Arm cylinder</text><text x="771" y="575">Boom</text><text x="837" y="575">Boom cylinder</text><text x="905" y="575">Cab</text><text x="965" y="575">Muffler</text><text x="1029" y="575">Counterweight</text><text x="653" y="788">Bucket cylinder</text><text x="734" y="788">Connecting link</text><text x="809" y="788">Front axle</text><text x="886" y="788">Travel motor</text><text x="949" y="788">Tool box</text><text x="1015" y="788">Rear axle</text><text x="671" y="809">Side cutter</text><text x="765" y="810">Connecting rod</text><text x="850" y="809">Front drive shaft</text><text x="929" y="809">Transmission</text><text x="1005" y="809">Rear drive shaft</text></g>
          <g class="lab"><text x="1025" y="707">Swing bearing</text><text x="1025" y="720">Dozer cylinder</text><text x="1025" y="753">Dozer blade</text></g>
        </svg>
      </article>
    </section>
  </main>
</div>
</body>
</html>
```
FILE: styles.css
```css
* { box-sizing: border-box; }
body { margin: 0; font-family: "Open Sans", "Noto Sans", sans-serif; color: #4b4b4b; background: #fbfbfb; }
button, input, select { font: inherit; color: inherit; background: none; border: 0; padding: 0; margin: 0; border-radius: 0; }
svg { display: block; }
.app { display: flex; flex-direction: column; height: 100vh; overflow: hidden; }

.titlebar { flex: none; height: 23px; display: flex; align-items: center; gap: 7px; padding-left: 4px; background: #fff; color: #000; font-family: Roboto, "Open Sans", sans-serif; font-size: 12px; }
.menubar { flex: none; height: 20px; display: flex; align-items: center; gap: 13px; padding: 0 0 2px 7px; font-size: 12px; }
.tabs { flex: none; height: 37px; display: flex; border-top: 1px solid #c6c6c6; font-size: 15px; }
.tab { background: #eaeaea; border-bottom: 1px solid #c6c6c6; text-align: left; padding: 0 0 2px 16px; }
.home { width: 72px; }
.tools-tab { width: 80px; border-right: 1px solid #c6c6c6; }
.doc-tab { width: 180px; display: flex; align-items: center; border-right: 1px solid #c6c6c6; font-size: 13px; }
.tab-name { flex: 1; padding-left: 16px; text-align: center; }
.tab-close { padding-right: 8px; }
.tab-fill { flex: 1; background: #eaeaea; border-bottom: 1px solid #c6c6c6; }

.toolbar { flex: none; height: 47px; display: flex; align-items: center; padding: 0 40px 0 3px; border-bottom: 1px solid #c6c6c6; }
.tool { width: 44px; height: 40px; display: flex; align-items: center; justify-content: center; }
.toolset { margin-left: auto; display: flex; align-items: center; font-size: 12px; }
.pager { width: 94px; height: 28px; padding-left: 10px; display: flex; align-items: center; gap: 6px; border-right: 1px solid #c6c6c6; }
.page-input { width: 28px; height: 28px; text-align: center; border-bottom: 1px solid #c6c6c6; }
.after-sep { margin-left: 10px; }
.zoom { width: 62px; height: 28px; margin-left: 10px; padding: 0 8px; display: flex; align-items: center; border-bottom: 1px solid #c6c6c6; }
.zoom select { appearance: none; flex: 1; min-width: 0; }
.caret { border: 4px solid transparent; border-top: 5px solid #6b6b6b; border-bottom: 0; }
.fit { margin-left: 15px; gap: 2px; }
.keys { margin-left: 7px; }
.sep { width: 1px; height: 28px; margin-left: 10px; background: #c6c6c6; }

.workspace { flex: 1; min-height: 0; display: flex; position: relative; }
.rail { flex: none; width: 45px; border-right: 1px solid #c6c6c6; padding: 21px 0 0 12px; display: flex; flex-direction: column; align-items: flex-start; gap: 23px; }
.pointer { position: absolute; left: 37px; top: 22px; }
.panel { flex: none; width: 309px; border-right: 1px solid #c6c6c6; display: flex; flex-direction: column; }
.panel-head { height: 41px; margin: 0 13px 0 16px; padding-bottom: 2px; display: flex; align-items: center; justify-content: space-between; border-bottom: 1px solid #c6c6c6; }
.panel-head h2 { margin: 0; font-size: 14px; font-weight: 400; }
.panel-head button { padding-right: 8px; }
.panel-tools { height: 44px; margin: 0 13px 0 16px; display: flex; align-items: center; gap: 12px; border-bottom: 1px solid #c6c6c6; }
.opts { display: flex; align-items: center; gap: 5px; height: 28px; width: 43px; margin-right: 4px; border-right: 1px solid #c6c6c6; }
.thumb-area { flex: 1; min-height: 0; margin: 7px 6px 0 0; display: flex; overflow: hidden; }
.thumbs { flex: 1; list-style: none; padding: 0 0 0 4px; margin: -42px 0 0; }
.thumbs li { height: 150px; }
.thumbs button { display: block; margin: 0 auto; font-size: 12px; line-height: 16px; color: #4b4b4b; }
.thumbs button svg { width: 86px; height: 117px; padding: 7px; background: #fff content-box; filter: drop-shadow(0 1px 1px #777); }
.thumbs .current svg { background: linear-gradient(#fff, #fff) content-box, #abcde1; outline: 1px dotted #333; outline-offset: -1px; filter: none; }
.tx { stroke: #111; stroke-width: 1.3; stroke-dasharray: 3 .4 2 .5; }
.scrollbar { flex: none; width: 16px; background: #f0f0f0; display: flex; flex-direction: column; align-items: center; padding: 6px 1px 0 0; }
.scroll-thumb { width: 15px; height: 17px; margin-top: 20px; background: #cdcdcd; }
.down { margin-top: auto; }
.collapse { flex: none; width: 18px; background: #eaeaea; display: flex; align-items: center; justify-content: center; padding-top: 12px; }
.viewer { flex: 1; min-width: 0; background: #999; padding: 0 3px 0 140px; overflow: hidden; }
.page { min-height: 100%; background: #fff; padding: 33px 81px 28px 81px; border-right: 1px solid #c6c6c6; font-family: "Liberation Sans", Arial, sans-serif; color: #231f20; }
.page h1, .page h3 { font-weight: 400; white-space: nowrap; }
.page h1 { margin: 0; height: 20px; padding-left: 6px; border: 1px solid #231f20; background: #d1d3d4; font-size: 14px; line-height: 19px; }
.page h3 { margin: 21px 0 0; font-size: 12px; line-height: 17px; }
.figure { width: 100%; height: auto; margin-top: 55px; }
.top-view { margin-top: 62px; }
.ink { fill: none; stroke: #000; stroke-width: 1; }
.lead { fill: none; stroke: #222; stroke-width: 1; }
.lab { font-size: 11px; fill: #000; }
.mid { text-anchor: middle; }
.brand { font-size: 12px; font-weight: 700; fill: #fff; stroke: #222; stroke-width: .8px; }
```
